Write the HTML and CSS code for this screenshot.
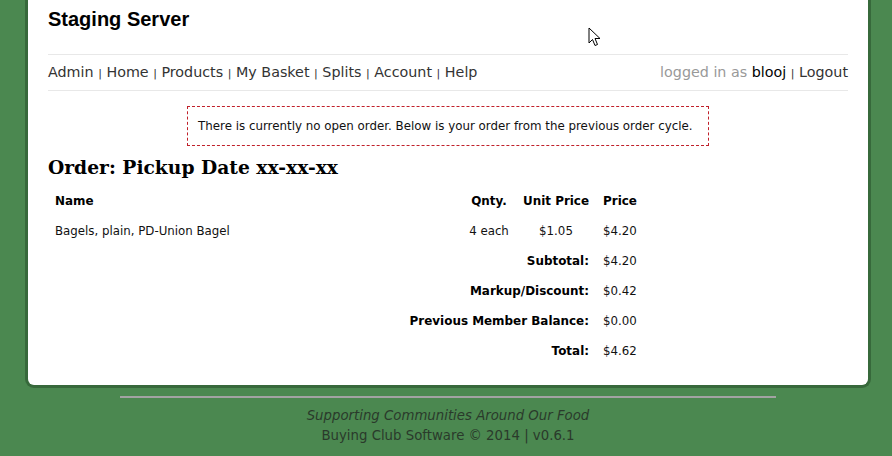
FILE: index.html
```html
<!DOCTYPE html>
<html lang="en">
<head>
    <meta charset="UTF-8">
    <title>Staging Server - Order</title>
    <link rel="stylesheet" href="styles.css">
</head>
<body>

    <div class="page">
        <h1 class="site-title">Staging Server</h1>

        <div class="nav">
            <div class="nav-links">
                <a href="#">Admin</a> <span class="sep">|</span>
                <a href="#">Home</a> <span class="sep">|</span>
                <a href="#">Products</a> <span class="sep">|</span>
                <a href="#">My Basket</a> <span class="sep">|</span>
                <a href="#">Splits</a> <span class="sep">|</span>
                <a href="#">Account</a> <span class="sep">|</span>
                <a href="#">Help</a>
            </div>
            <div class="nav-user">
                <span class="muted">logged in as</span> <span class="user">blooj</span>
                <span class="sep">|</span> <a href="#">Logout</a>
            </div>
        </div>

        <div class="notice">There is currently no open order. Below is your order from the previous order cycle.</div>

        <h2 class="order-title">Order: Pickup Date xx-xx-xx</h2>

        <table class="order-table">
            <colgroup>
                <col class="c-name">
                <col class="c-qty">
                <col class="c-unit">
                <col class="c-price">
            </colgroup>
            <thead>
                <tr>
                    <th class="left">Name</th>
                    <th>Qnty.</th>
                    <th>Unit Price</th>
                    <th class="left">Price</th>
                </tr>
            </thead>
            <tbody>
                <tr>
                    <td>Bagels, plain, PD-Union Bagel</td>
                    <td class="center">4 each</td>
                    <td class="center">$1.05</td>
                    <td>$4.20</td>
                </tr>
                <tr>
                    <td></td>
                    <th colspan="2" class="right">Subtotal:</th>
                    <td>$4.20</td>
                </tr>
                <tr>
                    <td></td>
                    <th colspan="2" class="right">Markup/Discount:</th>
                    <td>$0.42</td>
                </tr>
                <tr>
                    <th colspan="3" class="right">Previous Member Balance:</th>
                    <td>$0.00</td>
                </tr>
                <tr>
                    <td></td>
                    <th colspan="2" class="right">Total:</th>
                    <td>$4.62</td>
                </tr>
            </tbody>
        </table>

        <svg class="cursor" width="13" height="20" viewBox="0 0 13 20">
            <path d="M1 1 L1 16 L4.5 12.5 L7 18.5 L9.5 17.5 L7 11.5 L12 11.5 Z" fill="#fff" stroke="#000" stroke-width="1" stroke-linejoin="miter"/>
        </svg>
    </div>

    <div class="footer">
        <hr class="footer-rule">
        <div class="tagline">Supporting Communities Around Our Food</div>
        <div>Buying Club Software &copy; 2014 | v0.6.1</div>
    </div>

</body>
</html>
```

FILE: styles.css
```css
body {
    margin: 0;
    background-color: #4b8850;
    font-family: "DejaVu Sans", Verdana, sans-serif;
    color: #333;
}

.page {
    position: relative;
    margin: 0 21px 0 25px;
    padding: 0 20px 19px;
    background-color: #fff;
    border: 3px solid #37693b;
    border-top: none;
    border-radius: 0 0 9px 9px;
}

.site-title {
    margin: 0;
    height: 54px;
    padding-top: 8px;
    box-sizing: border-box;
    font-family: "Liberation Sans", Arial, sans-serif;
    font-size: 20px;
    color: #000;
}

.nav {
    display: flex;
    justify-content: space-between;
    align-items: center;
    height: 34px;
    padding-bottom: 1px;
    border-top: 1px solid #e8e8e8;
    border-bottom: 1px solid #e8e8e8;
    font-size: 14.3px;
}

.nav a {
    color: #333;
    text-decoration: none;
}

.sep {
    font-size: 11px;
}

.muted {
    color: #999;
}

.user {
    color: #000;
}

.notice {
    width: 510px;
    margin: 15px auto 0;
    padding: 12px 0 12px 10px;
    border: 1px dashed #c0202a;
    font-size: 11.85px;
    color: #111;
}

.order-title {
    margin: 10px 0 8px;
    font-family: "DejaVu Serif", Georgia, serif;
    font-size: 18.7px;
    color: #000;
}

.order-table {
    width: 600px;
    table-layout: fixed;
    border-collapse: collapse;
    font-size: 11.8px;
    color: #111;
}

.c-name { width: 414px; }
.c-qty { width: 54px; }
.c-unit { width: 80px; }
.c-price { width: 52px; }

th, td {
    height: 30px;
    padding: 0 7px;
    box-sizing: border-box;
    white-space: nowrap;
}

th {
    font-size: 11.95px;
    color: #000;
}

.left { text-align: left; }
.right { text-align: right; }
.center { text-align: center; }

.cursor {
    position: absolute;
    left: 560px;
    top: 27px;
}

.footer {
    padding-top: 8px;
    text-align: center;
    font-size: 13.3px;
    line-height: 20px;
    color: #2a3a2b;
    margin-left: 4px;
}

.footer-rule {
    width: 656px;
    margin: 0 auto 8px;
    border: none;
    border-top: 2px solid #a3a3a3;
}

.tagline {
    font-style: italic;
}
```
